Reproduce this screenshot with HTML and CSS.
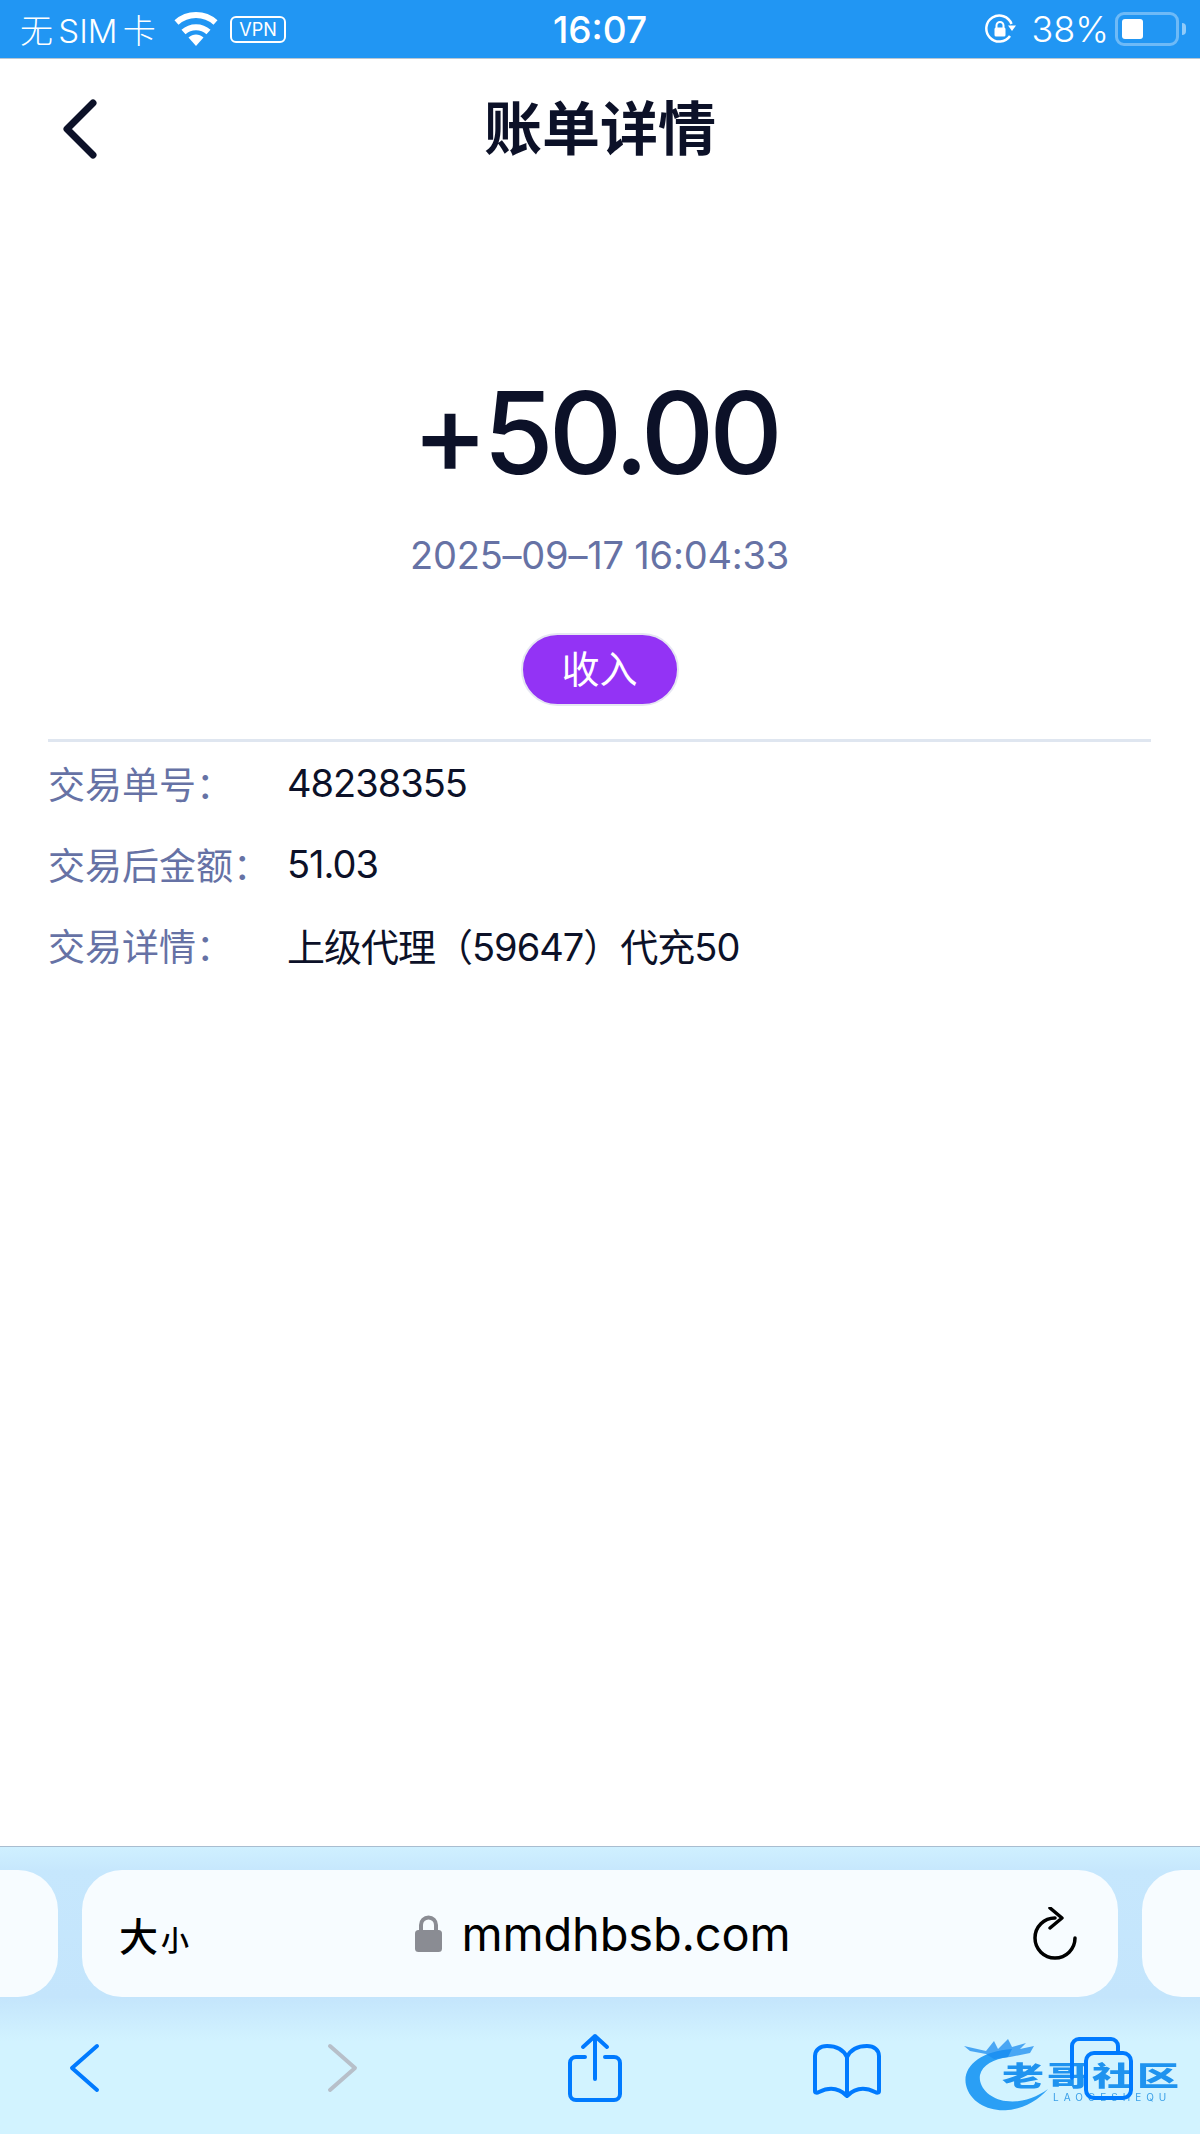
FILE: index.html
```html
<!DOCTYPE html>
<html lang="zh-CN">
<head>
<meta charset="utf-8">
<title>账单详情</title>
<link rel="stylesheet" href="styles.css">
</head>
<body>
<div class="app">
  <header class="status">
    <div class="status-left">
      <span class="carrier">无 SIM 卡</span>
      <svg class="wifi" viewBox="0 0 44 34"><path d="M22 34 14.500 25.500C19 21.500 25 21.500 29.500 25.500Z" fill="#fff"/><path d="M9.500 20C16.500 13.500 27.500 13.500 34.500 20" class="wifi-arc"/><path d="M2.500 10.500C13.500 .5 30.500 .5 41.500 10.500" class="wifi-arc"/></svg>
      <span class="vpn">VPN</span>
    </div>
    <div class="time">16:07</div>
    <div class="status-right">
      <svg class="rot" viewBox="0 0 32 32"><path d="M26 23A13 13 0 1 1 27.500 11" class="rot-arc"/><path d="M24 12.500H32L28 18Z" fill="#fff"/><path d="M12.500 15V12.500A3.500 3.500 0 0 1 19.500 12.500V15" class="rot-lock"/><rect x="10.500" y="14.500" width="11" height="9" rx="1.500" fill="#fff"/></svg>
      <span class="pct">38%</span>
      <div class="battery"><div class="battery-level"></div></div>
      <div class="battery-nub"></div>
    </div>
  </header>

  <nav class="nav">
    <svg class="nav-back" viewBox="0 0 40 62"><path d="M33 5 7 31 33 57"/></svg>
    <h1 class="nav-title">账单详情</h1>
  </nav>

  <main class="main">
    <section class="summary">
      <div class="amount">+50.00</div>
      <div class="date">2025–09–17 16:04:33</div>
      <div class="badge">收入</div>
    </section>
    <section class="details">
      <div class="row"><span class="label">交易单号：</span><span class="value">48238355</span></div>
      <div class="row"><span class="label">交易后金额：</span><span class="value">51.03</span></div>
      <div class="row"><span class="label">交易详情：</span><span class="value">上级代理（59647）代充50</span></div>
    </section>
  </main>

  <footer class="toolbar">
    <div class="address-row">
      <div class="side side-left"></div>
      <div class="url-bar">
        <div class="aa"><span class="aa-big">大</span><span class="aa-small">小</span></div>
        <div class="domain">
          <svg class="lock" viewBox="0 0 29 38"><path d="M7 17V10A7.500 7.500 0 0 1 22 10V17" class="lock-shackle"/><rect x="1" y="15" width="27" height="22" rx="3.500" fill="#8a8c93"/></svg>
          <span class="domain-text">mmdhbsb.com</span>
        </div>
        <svg class="reload" viewBox="0 0 46 54"><path d="M23 11A20 20 0 1 0 43 31"/><path d="M18 1 30 11 18 21"/></svg>
      </div>
      <div class="side side-right"></div>
    </div>
    <div class="watermark">
      <svg class="dragon" viewBox="0 0 100 76"><path d="M52 12C20 14 2 30 6 48 10 66 30 75 48 73 62 72 78 64 88 52 76 61 60 66 46 64 30 62 18 50 20 38 22 28 34 22 48 20Z" class="dragon-ring"/><path d="M4 9 26 14 34 4 38 12 48 2 52 10 66 6 60 12 74 9 70 16 50 20 34 22 26 17 10 14Z" class="dragon-head"/></svg>
      <div class="wm-text">
        <div class="wm-cn">老哥社区</div>
        <div class="wm-en">LAOGESHEQU</div>
      </div>
    </div>
    <div class="tool-row">
      <div class="tool"><svg class="tool-back" viewBox="0 0 32 50"><path d="M29 3 4 25 29 47" class="blue-line"/></svg></div>
      <div class="tool tool-shift-a"><svg class="tool-forward" viewBox="0 0 32 50"><path d="M3 3 28 25 3 47" class="grey-line"/></svg></div>
      <div class="tool tool-shift-b"><svg class="tool-share" viewBox="0 0 56 70"><path d="M18 24H9A6 6 0 0 0 3 30V61A6 6 0 0 0 9 67H47A6 6 0 0 0 53 61V30A6 6 0 0 0 47 24H38" class="blue-line"/><path d="M28 46V3M16 14 28 3 40 14" class="blue-line"/></svg></div>
      <div class="tool"><svg class="tool-book" viewBox="0 0 70 56"><path d="M35 14C31 6 24 3 15 3 8 3 3 7 3 13V48C3 50 5 50 7 49 17 44 27 45 35 53 43 45 53 44 63 49 65 50 67 50 67 48V13C67 7 62 3 55 3 46 3 39 6 35 14ZM35 14V53" class="blue-line"/></svg></div>
      <div class="tool"><svg class="tool-tabs" viewBox="0 0 64 64"><path d="M3 42V10A7 7 0 0 1 10 3H42A7 7 0 0 1 49 10V17" class="blue-line"/><rect x="17" y="17" width="45" height="45" rx="8" class="blue-line"/></svg></div>
    </div>
  </footer>
</div>
</body>
</html>
```
FILE: styles.css
```css
* { box-sizing: border-box; }
html, body { margin: 0; padding: 0; }
body { background: #fff; font-family: Inter, "Noto Sans CJK SC", sans-serif; color: #0c1128; }
.app { width: 1200px; height: 2134px; display: flex; flex-direction: column; overflow: hidden; }

/* status bar */
.status { height: 59px; flex: none; background: #2196f3; border-bottom: 1px solid #b9c6d2; color: #fff; display: grid; grid-template-columns: 1fr auto 1fr; align-items: center; padding: 0 14px 0 20px; }
.status-left { display: flex; align-items: center; }
.carrier { font-size: 33px; word-spacing: -4px; width: 154px; white-space: nowrap; font-weight: 300; }
.wifi { width: 44px; height: 34px; }
.wifi-arc { fill: none; stroke: #fff; stroke-width: 6; }
.vpn { margin-left: 12px; width: 56px; height: 27px; border: 2px solid #fff; border-radius: 6px; font-size: 18px; line-height: 23px; text-align: center; }
.time { font-size: 37px; font-weight: 500; margin-right: 6px; }
.status-right { display: flex; align-items: center; justify-content: flex-end; }
.rot { width: 32px; height: 32px; }
.rot-arc { fill: none; stroke: #fff; stroke-width: 2.500; }
.rot-lock { fill: none; stroke: #fff; stroke-width: 2; }
.pct { margin-left: 15px; font-size: 36px; font-weight: 300; }
.battery { margin-left: 6px; width: 64px; height: 34px; border: 3px solid rgba(255,255,255,.35); border-radius: 9px; padding: 4px; }
.battery-level { width: 21px; height: 100%; background: #fff; border-radius: 3px; }
.battery-nub { width: 4px; height: 12px; margin-left: 3px; background: rgba(255,255,255,.5); border-radius: 0 4px 4px 0; }

/* nav */
.nav { height: 129px; flex: none; display: grid; grid-template-columns: 1fr auto 1fr; align-items: center; padding: 10px 60px 0; }
.nav-back { width: 40px; height: 62px; fill: none; stroke: #0c1128; stroke-width: 7; stroke-linecap: round; stroke-linejoin: round; }
.nav-title { margin: 0; font-size: 58px; font-weight: 600; line-height: 80px; color: #0c1128; }

/* main */
.main { flex: 1; padding: 0 49px 0 48px; }
.summary { display: flex; flex-direction: column; align-items: center; padding-top: 177px; border-bottom: 3px solid #dfe6f0; padding-bottom: 33px; }
.amount { font-size: 114px; line-height: 136px; font-weight: 550; letter-spacing: -5px; padding-right: 9px; color: #0c1128; }
.date { margin-top: 29px; font-size: 38px; line-height: 50px; letter-spacing: -.2px; color: #6672a5; }
.badge { margin-top: 53px; width: 158px; height: 73px; border-radius: 37px; background: #9333f5; border: 2px solid #e6e6f2; color: #fff; font-size: 38px; line-height: 68px; text-align: center; }
.details { display: flex; flex-direction: column; }
.row { height: 81px; display: flex; align-items: center; font-size: 37px; }
.label { width: 239px; flex: none; color: #6672a5; }
.value { color: #0c1128; font-size: 38px; letter-spacing: -1px; }

/* browser toolbar */
.toolbar { height: 288px; flex: none; position: relative; border-top: 1px solid #a9bdd0; background: linear-gradient(#cff0ff 0, #c6e7fd 24px, #c4e5fc 150px, #d2f3ff 195px); }
.address-row { display: flex; gap: 24px; margin-top: 23px; height: 127px; }
.side { width: 58px; background: #f7fcff; }
.side-left { border-radius: 0 40px 40px 0; }
.side-right { border-radius: 40px 0 0 40px; }
.url-bar { flex: 1; background: #f7fcff; border-radius: 40px; display: grid; grid-template-columns: 1fr auto 1fr; align-items: center; padding: 0 40px 0 37px; color: #000; }
.aa { display: flex; align-items: baseline; font-weight: 500; }
.aa-big { font-size: 39px; }
.aa-small { font-size: 28px; margin-left: 3px; }
.domain { display: flex; align-items: center; gap: 19px; padding-left: 7px; }
.lock { width: 29px; height: 38px; }
.lock-shackle { fill: none; stroke: #8a8c93; stroke-width: 4; }
.domain-text { font-size: 47px; line-height: 60px; letter-spacing: -.2px; }
.reload { justify-self: end; width: 46px; height: 54px; fill: none; stroke: #000; stroke-width: 3.500; stroke-linecap: round; stroke-linejoin: round; }

.watermark { position: absolute; left: 960px; top: 190px; width: 226px; height: 76px; filter: blur(.7px); }
.dragon { position: absolute; left: 0; top: 0; width: 100px; height: 76px; }
.dragon-ring { fill: #2a9ff5; }
.dragon-head { fill: #1b8cf0; opacity: .75; }
.wm-text { position: absolute; left: 42px; top: 24px; width: 182px; }
.wm-cn { font-size: 42px; line-height: 42px; height: 30px; font-weight: 900; letter-spacing: 3px; white-space: nowrap; font-family: "Noto Sans CJK SC", sans-serif; transform: scaleY(.64); transform-origin: top; color: #1f93ef; }
.wm-en { margin-top: 1px; padding-left: 51px; font-size: 10px; line-height: 10px; letter-spacing: 5px; color: #3a9fe8; white-space: nowrap; }

.tool-row { position: relative; margin-top: 36px; display: flex; justify-content: space-between; padding: 0 57px 0 42px; }
.tool { width: 84px; height: 70px; display: flex; align-items: center; justify-content: center; }
.tool svg { fill: none; stroke-linecap: round; stroke-linejoin: round; }
.tool-shift-a { padding-left: 10px; }
.tool-shift-b { padding-left: 4px; }
.blue-line { fill: none; stroke: #007aff; stroke-width: 4; }
.grey-line { fill: none; stroke: #b7bfc9; stroke-width: 4; }
.tool-back, .tool-forward { width: 32px; height: 50px; }
.tool-share { width: 56px; height: 70px; }
.tool-book { width: 70px; height: 56px; margin-top: 6px; }
.tool-tabs { width: 64px; height: 64px; }
```
